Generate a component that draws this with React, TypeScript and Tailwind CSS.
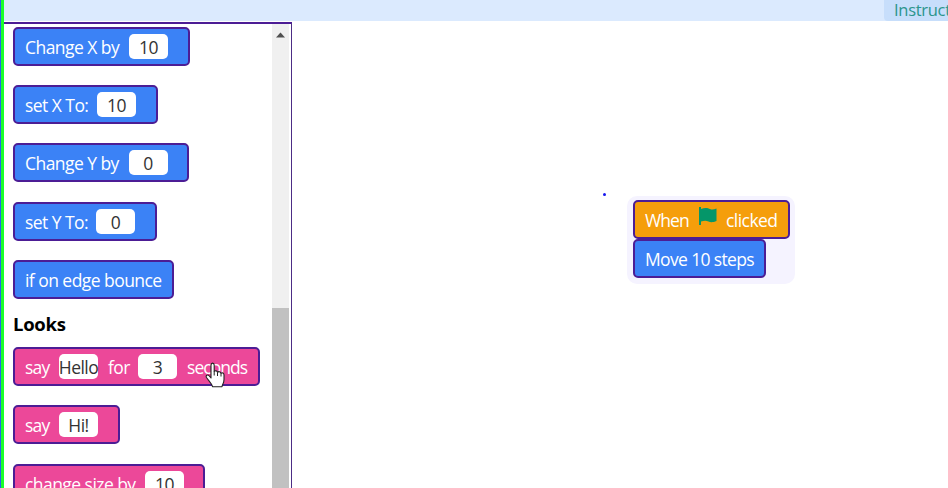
import type { ReactNode } from "react";

const tones = {
  blue: "bg-[#3b82f6]",
  pink: "bg-[#ec4899]",
  amber: "bg-[#f59e0b]",
};

function Block({ tone, width, children }: { tone: keyof typeof tones; width: string; children: ReactNode }) {
  return (
    <div className={`flex h-[39px] shrink-0 items-center rounded-[5px] border-2 border-[#4c1d95] pl-[10px] text-white ${tones[tone]} ${width}`}>
      {children}
    </div>
  );
}

function Label({ width, children }: { width: string; children: ReactNode }) {
  return <span className={`shrink-0 pt-px whitespace-nowrap ${width}`}>{children}</span>;
}

function Field({ children }: { children: ReactNode }) {
  return (
    <span className="flex h-[25px] w-[39px] shrink-0 items-center justify-center rounded-[5px] bg-white pt-px text-[#333]">
      {children}
    </span>
  );
}

export default function App() {
  return (
    <div className="relative flex h-[488px] w-[948px] overflow-hidden bg-white font-['Open_Sans','Noto_Sans',sans-serif] text-[17.5px] leading-[24px] tracking-[-0.55px]">
      <div className="w-px shrink-0 bg-[#2563eb]" />
      <div className="w-[2.5px] shrink-0 bg-[#1aff2a]" />
      <div className="flex min-w-0 flex-1 flex-col">
        <header className="flex h-[21px] shrink-0 justify-end bg-[#dbeafe]">
          <div className="h-[21px] w-[64px] overflow-hidden rounded-bl-[4px] bg-[#c7defb] pl-[10px] text-[16.5px] leading-[20px] tracking-[-0.3px] whitespace-nowrap text-[#2b958c]">
            Instruct
          </div>
        </header>
        <div className="flex min-h-0 flex-1">
          <aside className="mt-px flex w-[288.5px] shrink-0 overflow-hidden border-t-2 border-r border-t-[#4c1d95] border-r-[#4c2d85]">
            <div className="flex flex-1 flex-col gap-[19.2px] pt-[3px] pl-[9.5px]">
              <Block tone="blue" width="w-[177px]">
                <Label width="w-[104px]">Change X by</Label>
                <Field>10</Field>
              </Block>
              <Block tone="blue" width="w-[145px]">
                <Label width="w-[72px]">set X To:</Label>
                <Field>10</Field>
              </Block>
              <Block tone="blue" width="w-[176px]">
                <Label width="w-[103.5px]">Change Y by</Label>
                <Field>0</Field>
              </Block>
              <Block tone="blue" width="w-[144px]">
                <Label width="w-[71px]">set Y To:</Label>
                <Field>0</Field>
              </Block>
              <Block tone="blue" width="w-[161px]">
                <Label width="w-[137px]">if on edge bounce</Label>
              </Block>
              <h2 className="-mt-[6px] -mb-[7px] h-[23px] text-[18.5px] leading-[23px] font-bold tracking-[-0.3px] text-black">Looks</h2>
              <Block tone="pink" width="w-[247px]">
                <Label width="w-[34px] tracking-[-0.8px]">say</Label>
                <Field>Hello</Field>
                <Label width="w-[40px] pl-[10px]">for</Label>
                <Field>3</Field>
                <Label width="w-[70px] pl-[10px] tracking-[-0.95px]">seconds</Label>
              </Block>
              <Block tone="pink" width="w-[107px]">
                <Label width="w-[34px] tracking-[-0.8px]">say</Label>
                <Field>Hi!</Field>
              </Block>
              <Block tone="pink" width="w-[192px]">
                <Label width="w-[120px]">change size by</Label>
                <Field>10</Field>
              </Block>
            </div>
            <div className="mr-[2px] flex w-[17px] shrink-0 flex-col bg-[#f0f0f0]">
              <svg className="mt-[8px] ml-[4px] h-[6px] w-[9px] shrink-0" viewBox="0 0 9 6"><path d="M0 5.5 4.5.5 9 5.5Z" fill="#505050" /></svg>
              <div className="mt-[270px] flex-1 bg-[#c1c1c1]" />
            </div>
          </aside>
          <main className="relative flex-1">
            <div className="absolute top-[172px] left-[311px] h-[3px] w-[3px] rounded-full bg-[#1717ee]" />
            <section className="absolute top-[175px] left-[335px] flex h-[88px] w-[168px] flex-col rounded-[10px] bg-[#f5f3ff] pt-[4px] pl-[6px]">
              <Block tone="amber" width="w-[157px]">
                <Label width="w-[53px] tracking-[-0.9px]">When</Label>
                <svg className="-mt-[6px] mr-[9px] h-[19px] w-[19px] shrink-0" viewBox="0 0 19 19">
                  <path d="M1 0H3V2C7 .3 10 1 12 2S16 2.5 18.5 1.4V14C15 15.5 12.5 15.4 10.5 14.5S6 13.6 3 14.5V18H1Z" fill="#059669" />
                </svg>
                <Label width="w-[53px]">clicked</Label>
              </Block>
              <Block tone="blue" width="w-[133px]">
                <Label width="w-[109px] tracking-[-0.65px]">Move 10 steps</Label>
              </Block>
            </section>
          </main>
        </div>
      </div>
      <svg className="absolute top-[362px] left-[205px] h-[26px] w-[21px]" viewBox="0 0 21 26">
        <path d="M6 16V3.2C6 .4 9.2.4 9.2 3.2V9.5C10 8.4 12.2 8.6 12.5 10.3C13.5 9.2 15.6 9.6 16 11.3C17.4 10.4 19 11.1 19 13V17.5C19 21 17.5 22 17 24.7H7.5C7 22 4.5 19.7 1.5 15.5C.2 13.2 2.8 12.2 4.3 14Z" fill="white" stroke="#222" strokeWidth="1.1" strokeLinejoin="round" />
        <path d="M9.2 9.5V13.5M12.5 10.3V14M16 11.3V14.5" fill="none" stroke="#222" strokeWidth="1" />
      </svg>
    </div>
  );
}
